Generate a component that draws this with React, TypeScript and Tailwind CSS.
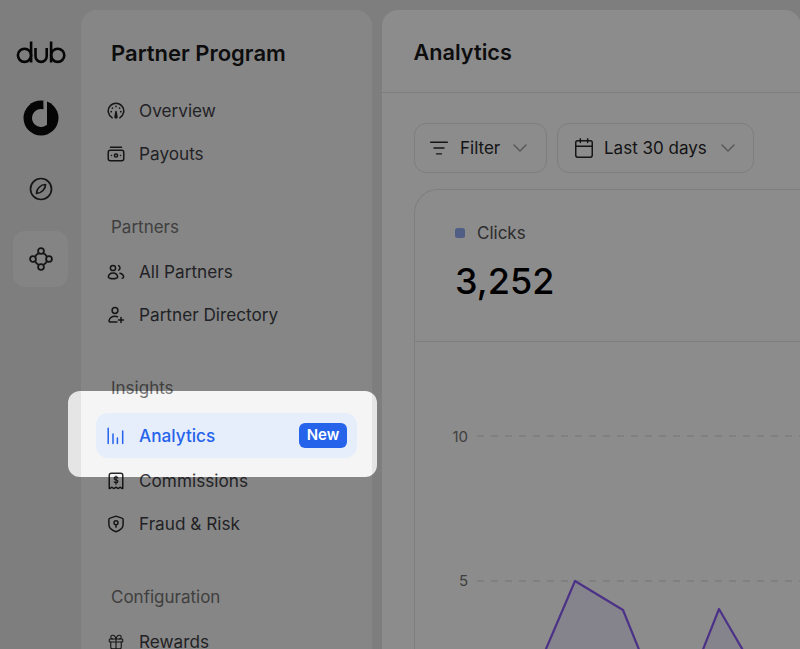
import { Calendar, ChevronDown, Gift, ListFilter } from "lucide-react";
import type { ReactNode } from "react";

function OverviewIcon() {
  return (
    <svg width="18" height="18" viewBox="0 0 18 18" fill="none" stroke="currentColor" strokeWidth="1.5" strokeLinecap="round">
      <path d="M5.2 15.8A7.75 7.75 0 1 1 12.8 15.8" />
      <path d="M9 9.5 8 15a1 1 0 0 0 2 0Z" fill="currentColor" strokeLinejoin="round" />
      <path d="M9 4.4v.1M5.4 6v.1M12.6 6v.1M4.2 9.6v.1M13.8 9.6v.1" strokeWidth="1.7" />
    </svg>
  );
}

function PayoutsIcon() {
  return (
    <svg width="18" height="18" viewBox="0 0 18 18" fill="none" stroke="currentColor" strokeWidth="1.5" strokeLinecap="round" strokeLinejoin="round">
      <rect x="1.25" y="5.25" width="15.5" height="10.5" rx="2" />
      <path d="M3.5 2.25h11" />
      <circle cx="9" cy="10.5" r="1.6" />
      <path d="M4.5 10.5h.01M13.5 10.5h.01" />
    </svg>
  );
}

function AllPartnersIcon() {
  return (
    <svg width="18" height="18" viewBox="0 0 18 18" fill="none" stroke="currentColor" strokeWidth="1.5" strokeLinecap="round" strokeLinejoin="round">
      <circle cx="6" cy="5" r="2.6" />
      <path d="M11.6 2.6a2.6 2.6 0 0 1 0 4.6" />
      <path d="M1.3 14.2C1.6 11.6 3.5 10 6 10s4.4 1.6 4.7 4.2c.1.9-2.2 1.6-4.7 1.6s-4.8-.7-4.7-1.6Z" />
      <path d="M13 10.3c2 .4 3.4 1.8 3.7 3.7.1.5-.5 1-1.5 1.3" />
    </svg>
  );
}

function PartnerDirectoryIcon() {
  return (
    <svg width="18" height="18" viewBox="0 0 18 18" fill="none" stroke="currentColor" strokeWidth="1.5" strokeLinecap="round" strokeLinejoin="round">
      <circle cx="8" cy="4.5" r="2.9" />
      <path d="M10.5 10.8A7 7 0 0 0 8 10.3c-2.9 0-5.3 1.8-6 4.3-.2.7.3 1.3 1 1.3h7" />
      <path d="M14 11.5v5M11.5 14h5" />
    </svg>
  );
}

function AnalyticsIcon() {
  return (
    <svg width="18" height="18" viewBox="0 0 18 18" fill="none" stroke="currentColor" strokeWidth="1.5" strokeLinecap="round">
      <path d="M1.2 1.2v15.3M6 7v9.5M10.4 11v5.5M15.7 4v12.5" />
    </svg>
  );
}

function CommissionsIcon() {
  return (
    <svg width="18" height="18" viewBox="0 0 18 18" fill="none" stroke="currentColor" strokeWidth="1.5" strokeLinecap="round" strokeLinejoin="round">
      <path d="M2.25 16.5V3.25a2 2 0 0 1 2-2h9.5a2 2 0 0 1 2 2V16.5c-1.3 0-1.7-1.2-2.6-1.2s-1.3 1.2-2.05 1.2S9.8 15.3 9 15.3s-1.3 1.2-2.1 1.2-1.2-1.2-2.05-1.2-1.3 1.2-2.6 1.2Z" />
      <path d="M10.8 6C10.5 5.3 9.8 4.9 9 4.9c-1 0-1.8.6-1.8 1.5 0 2 3.7 1 3.7 3 0 .9-.9 1.500-1.900 1.500-.8 0-1.500-.4-1.800-1.100M9 4v8.300" strokeWidth="1.2" />
    </svg>
  );
}

function FraudIcon() {
  return (
    <svg width="18" height="18" viewBox="0 0 18 18" fill="none" stroke="currentColor" strokeWidth="1.5" strokeLinecap="round" strokeLinejoin="round">
      <path d="M8.4 1.4 3 3.1c-.7.2-1.1.7-1.1 1.4V9.5c0 3.3 3 5.900 7.100 7.200 4.100-1.300 7.100-3.900 7.100-7.200V4.500c0-.7-.4-1.200-1.100-1.400L9.600 1.400a2 2 0 0 0-1.200 0Z" />
      <circle cx="9" cy="7.8" r="2" />
      <path d="M9 9.8v2.4" />
    </svg>
  );
}

function NetworkIcon() {
  return (
    <svg width="24" height="24" viewBox="0 0 24 24" fill="none" stroke="currentColor" strokeWidth="1.8">
      <circle cx="12" cy="12" r="6.2" />
      <circle cx="12" cy="4" r="2.9" fill="#f0f0f0" />
      <circle cx="12" cy="20" r="2.9" fill="#f0f0f0" />
      <circle cx="4" cy="12" r="2.9" fill="#f0f0f0" />
      <circle cx="20" cy="12" r="2.9" fill="#f0f0f0" />
    </svg>
  );
}

function CompassIcon() {
  return (
    <svg className="mt-[40px] text-[#27272a]" width="26" height="26" viewBox="0 0 26 26" fill="none" stroke="currentColor" strokeWidth="1.7">
      <circle cx="13" cy="13" r="10.5" />
      <path d="M17.5 8.5c.2 4.3-4 8.7-9 9-.2-4.7 4.3-9 9-9Z" strokeLinejoin="round" />
    </svg>
  );
}

// dub wordmark, round bowls so not a system font
function DubLogo() {
  return (
    <svg width="50" height="24" viewBox="15.5 40 50 24" fill="none" stroke="#0a0a0a" strokeWidth="2.6" aria-label="dub">
      <circle cx="24" cy="55.3" r="6.6" />
      <path d="M30.6 41.5V62.5" />
      <path d="M35 48v8.3a5.6 5.600 0 0 0 11.200 0V48" />
      <path d="M50.600 41.500V62.500" />
      <circle cx="57.200" cy="55.300" r="6.600" />
    </svg>
  );
}

function CircleLogo() {
  return (
    <svg className="mt-[36px]" width="36" height="36" viewBox="0 0 36 36">
      <circle cx="18" cy="18" r="17.5" fill="#0a0a0a" />
      <path d="M24 0.5 20.3 0.5 20.5 9.35A9 9 0 1 0 24 24.7Z" fill="#e5e5e5" />
    </svg>
  );
}

function NavItem({ icon, label }: { icon: ReactNode; label: string }) {
  return (
    <div className="flex h-[43px] items-center gap-[14px] pl-[26px] text-[#3f3f46]">
      <span className="flex w-[18px] justify-center text-[#27272a]">{icon}</span>
      <span className="text-[17.2px] leading-none">{label}</span>
    </div>
  );
}

function GroupLabel({ children }: { children: ReactNode }) {
  return <div className="pl-[30px] text-[17px] leading-[22px] text-[#737373]">{children}</div>;
}

function Sidebar() {
  return (
    <aside className="mt-[10px] h-[720px] w-[291px] shrink-0 rounded-t-2xl bg-[#f5f5f5]">
      <h2 className="pl-[30px] pt-[29px] text-[22px] font-semibold leading-[28px] text-[#18181b]">Partner Program</h2>
      <div className="mt-[22px]">
        <NavItem icon={<OverviewIcon />} label="Overview" />
        <NavItem icon={<PayoutsIcon />} label="Payouts" />
      </div>
      <div className="mt-[41px]">
        <GroupLabel>Partners</GroupLabel>
      </div>
      <div className="mt-[12px]">
        <NavItem icon={<AllPartnersIcon />} label="All Partners" />
        <NavItem icon={<PartnerDirectoryIcon />} label="Partner Directory" />
      </div>
      <div className="mt-[41px]">
        <GroupLabel>Insights</GroupLabel>
      </div>
      <div className="mt-[14px]">
        <div className="mx-[15px] mb-[1px] flex h-[45px] items-center gap-[14px] rounded-xl bg-[#e6eefb] pl-[11px] pr-[10px] text-[#2563eb]">
          <span className="flex w-[18px] justify-center">
            <AnalyticsIcon />
          </span>
          <span className="flex-1 text-[17.2px] font-medium leading-none">Analytics</span>
          <span className="flex h-[25px] w-[48px] items-center justify-center rounded-md bg-[#2563eb] text-[15px] font-semibold text-white">New</span>
        </div>
        <NavItem icon={<CommissionsIcon />} label="Commissions" />
        <NavItem icon={<FraudIcon />} label="Fraud & Risk" />
      </div>
      <div className="mt-[41px]">
        <GroupLabel>Configuration</GroupLabel>
      </div>
      <div className="mt-[12px]">
        <NavItem icon={<Gift size={18} strokeWidth={1.5} />} label="Rewards" />
      </div>
    </aside>
  );
}

function Rail() {
  return (
    <nav className="flex w-[81px] shrink-0 flex-col items-center pt-[40px]">
      <DubLogo />
      <CircleLogo />
      <CompassIcon />
      <div className="mt-[29px] flex h-[56px] w-[55px] items-center justify-center rounded-xl bg-[#f0f0f0] text-[#27272a]">
        <NetworkIcon />
      </div>
    </nav>
  );
}

function ChartArea() {
  return (
    <svg className="block" width="386" height="310" viewBox="414 342 386 310">
      <path d="M476 436H800M476 581H800" stroke="#d4d4d4" strokeDasharray="7 7" />
      <text x="467" y="442" textAnchor="end" fontSize="15" fill="#737373">10</text>
      <text x="467" y="586" textAnchor="end" fontSize="15" fill="#737373">5</text>
      <path d="M543.7 652 574 581 622 610 639 652ZM701 652 718 609 743 652Z" fill="#8b5cf6" fillOpacity="0.1" />
      <path d="M543.7 652 574 581 622 610 639 652M701 652 718 609 743 652" fill="none" stroke="#8b5cf6" strokeWidth="2.2" strokeLinejoin="round" />
    </svg>
  );
}

function Main() {
  return (
    <main className="ml-[10px] mt-[10px] h-[720px] flex-1 rounded-t-2xl bg-white">
      <div className="flex h-[83px] items-center border-b border-[#e5e5e5] pl-[31.5px] pt-[2px]">
        <h1 className="text-[21.7px] font-semibold text-[#18181b]">Analytics</h1>
      </div>
      <div className="flex gap-[10px] pl-[32px] pt-[30px]">
        <div className="flex h-[50px] w-[133px] items-center rounded-xl border border-[#e5e5e5] pl-[14px] text-[#27272a]">
          <ListFilter size={20} strokeWidth={1.7} />
          <span className="ml-[11px] pt-[1px] text-[17px]">Filter</span>
          <ChevronDown className="ml-[8px] text-[#a3a3a3]" size={24} strokeWidth={1.5} />
        </div>
        <div className="flex h-[50px] w-[197px] items-center rounded-xl border border-[#e5e5e5] pl-[15px] text-[#27272a]">
          <Calendar size={22} strokeWidth={1.6} />
          <span className="ml-[9px] pt-[1px] text-[17px]">Last 30 days</span>
          <ChevronDown className="ml-[9px] text-[#a3a3a3]" size={24} strokeWidth={1.5} />
        </div>
      </div>
      <section className="ml-[32px] mt-[16px] h-[520px] rounded-tl-[24px] border-l border-t border-[#e5e5e5]">
        <div className="h-[152px] border-b border-[#e5e5e5] pl-[40px] pt-[32px]">
          <div className="flex items-center gap-[12px]">
            <span className="h-[10px] w-[10px] rounded-[2.5px] bg-[#93a9f2]" />
            <span className="text-[17px] leading-[22px] text-[#525252]">Clicks</span>
          </div>
          <div className="mt-[14px] text-[36px] font-medium leading-[46px] text-black">3,252</div>
        </div>
        <ChartArea />
      </section>
    </main>
  );
}

export default function App() {
  return (
    <div className="relative h-[649px] w-[800px] overflow-hidden bg-[#e5e5e5] font-['Inter',sans-serif]">
      <div className="flex">
        <Rail />
        <Sidebar />
        <Main />
      </div>
      {/* spotlight: dims the page everywhere but this box */}
      <div className="absolute left-[68px] top-[391px] h-[86px] w-[309px] rounded-xl shadow-[0_0_0_1000px_rgba(0,0,0,0.45)]" />
    </div>
  );
}
